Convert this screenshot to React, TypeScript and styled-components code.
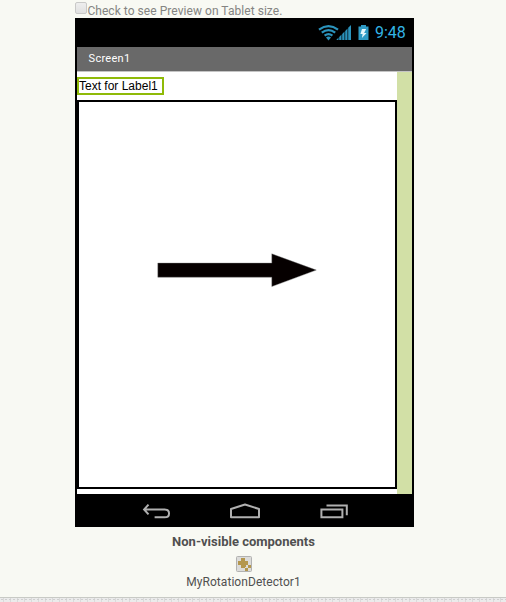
import React from 'react';
import styled, { createGlobalStyle } from 'styled-components';

const GlobalStyle = createGlobalStyle`
  * { box-sizing: border-box; }
  body { margin: 0; background: #f8f9f3; font-family: Roboto, sans-serif; overflow: hidden; }
`;

const Page = styled.main`
  height: 602px;
  display: flex;
  flex-direction: column;
  background: #f8f9f3;
`;

const Designer = styled.section`
  width: 339px;
  margin-left: 75px;
  height: 597px;
  display: flex;
  flex-direction: column;
`;

const PreviewOption = styled.label`
  height: 18px;
  display: flex;
  align-items: flex-start;
  color: #848482;
  font-size: 12px;
  line-height: 14px;
  padding-top: 2px;
  white-space: nowrap;
`;

const Checkbox = styled.input`
  appearance: none;
  width: 12px;
  height: 12px;
  margin: 0;
  border: 1px solid #c9c9c8;
  border-radius: 2px;
  background: linear-gradient(#eee, #e0e0e0);
`;

const OptionText = styled.span`
  padding: 2px 0 0 0.4px;
  letter-spacing: 0.05px;
`;

const Phone = styled.div`
  height: 509px;
  background: #000;
  padding: 0 2px;
`;

const StatusBar = styled.div`
  height: 29px;
  display: flex;
  justify-content: flex-end;
  align-items: center;
  padding-right: 6px;
`;

const StatusIcons = styled.svg`
  width: 52px;
  height: 18px;
  margin-right: 5px;
`;

const Clock = styled.span`
  width: 31px;
  color: #33b5e5;
  font: 16px/18px Roboto, sans-serif;
  white-space: nowrap;
  padding-top: 1px;
`;

const TitleBar = styled.div`
  height: 25px;
  padding: 0 0 1px 11.6px;
  background: #696969;
  border-bottom: 1px solid #c4c4c4;
  color: #fff;
  font-size: 11px;
  line-height: 23px;
  letter-spacing: 0.28px;
`;

const Screen = styled.div`
  height: 422px;
  display: flex;
  background: #fff;
`;

const ScreenContent = styled.div`
  width: 320px;
  padding-top: 5px;
`;

const ScrollTrack = styled.div`
  width: 15px;
  background: #d2e0a6;
`;

const SelectedLabel = styled.div`
  width: 87px;
  height: 18px;
  border: 2px solid #8fba08;
  color: #000;
  font: 12px/14px "Liberation Sans", Arial, sans-serif;
  white-space: nowrap;
`;

const Canvas = styled.div`
  height: 389px;
  margin-top: 5px;
  border: 2px solid #000;
  padding: 150px 0 0 78px;
`;

const Arrow = styled.svg`
  display: block;
  width: 161px;
  height: 36px;
`;

const NavigationBar = styled.div`
  height: 33px;
  display: flex;
  padding: 7px 0 0 64px;
`;

const NavigationIcons = styled.svg`
  width: 210px;
  height: 20px;
`;

const Components = styled.div`
  display: flex;
  flex-direction: column;
  align-items: center;
  height: 70px;
  padding: 7px 2px 0 0;
  color: #505050;
`;

const ComponentsHeading = styled.div`
  font-size: 13px;
  font-weight: 700;
  line-height: 16px;
  white-space: nowrap;
`;

const DetectorIcon = styled.svg`
  width: 16px;
  height: 16px;
  margin-top: 6px;
  flex: none;
`;

const ComponentName = styled.div`
  font-size: 12px;
  line-height: 16px;
  margin-top: 2px;
  letter-spacing: 0.06px;
`;

const Footer = styled.footer`
  height: 5px;
  border-top: 1px solid #c8cac5;
  background-color: #ebebeb;
  background-image:
    radial-gradient(circle, #cfcfcf 0.7px, transparent 0.9px),
    radial-gradient(circle, #dadada 0.7px, transparent 0.9px);
  background-size: 4px 3px, 7px 2px;
`;

export default function App() {
  return (
    <Page>
      <GlobalStyle />
      <Designer>
        <PreviewOption>
          <Checkbox type="checkbox" />
          <OptionText>Check to see Preview on Tablet size.</OptionText>
        </PreviewOption>
        <Phone>
          <StatusBar>
            <StatusIcons viewBox="0 0 52 18" fill="none">
              <g stroke="#2b93bc" strokeWidth="2.3">
                <path d="M1 5.6Q10.5-1.2 20 5.6M3.8 8.7Q10.5 3.6 17.2 8.7M6.6 11.7Q10.5 8.6 14.4 11.7" />
              </g>
              <path d="M8 13.4Q10.5 11.8 13 13.4L10.5 16.5Z" fill="#2b93bc" />
              <path d="M18.3 16l2.2-2.4V16ZM21.2 16v-3l2.3-2.4V16ZM24.2 16v-6l2.3-2.4V16ZM27.2 16V7l2.3-2.4V16ZM30.2 16V3.8L33 1v15Z" fill="#2b93bc" />
              <path d="M43 1h5v1.5h2.5V16h-10V2.5H43Z" fill="#2f9bc5" />
              <path d="m44 5-1.6 5h2.2l-.7 4 4.7-5h-2.5l2-4Z" fill="#e5f6fb" />
            </StatusIcons>
            <Clock>9:48</Clock>
          </StatusBar>
          <TitleBar>Screen1</TitleBar>
          <Screen>
            <ScreenContent>
              <SelectedLabel>Text for Label1</SelectedLabel>
              <Canvas>
                <Arrow viewBox="0 0 161 36">
                  <path d="M.8 11.1h114V1.8L159.3 18.1l-44.5 16.5v-9.4H.8Z" fill="#060000" stroke="#777" strokeWidth=".4" />
                </Arrow>
              </Canvas>
            </ScreenContent>
            <ScrollTrack />
          </Screen>
          <NavigationBar>
            <NavigationIcons viewBox="0 0 210 20" fill="none" stroke="#b0b0b0" strokeWidth="2">
              <path d="m7.5 3.6-4.4 4.9 4.4 4.9M3.5 8.5h20.2c5.8 0 5.8 7.8 0 7.8H13.6" />
              <path d="M90 16.3V8L104 3.5 118 8v8.3Z" strokeLinejoin="round" />
              <path d="M180.4 8.4h21v7.9h-21ZM185.5 4.5h20.3v9.8" />
            </NavigationIcons>
          </NavigationBar>
        </Phone>
        <Components>
          <ComponentsHeading>Non-visible components</ComponentsHeading>
          <DetectorIcon viewBox="0 0 16 16">
            <rect x=".5" y=".5" width="15" height="15" rx="1" fill="#dcdcda" stroke="#b2b2b1" />
            <path d="M5 2h4v3h3v4H9v3H5V9H2V5h3Z" fill="#b4974e" />
            <path d="M12 9h3v3h-3ZM9 12h3v3H9ZM8 9h2v2H8Z" fill="#b4974e" />
          </DetectorIcon>
          <ComponentName>MyRotationDetector1</ComponentName>
        </Components>
      </Designer>
      <Footer />
    </Page>
  );
}
